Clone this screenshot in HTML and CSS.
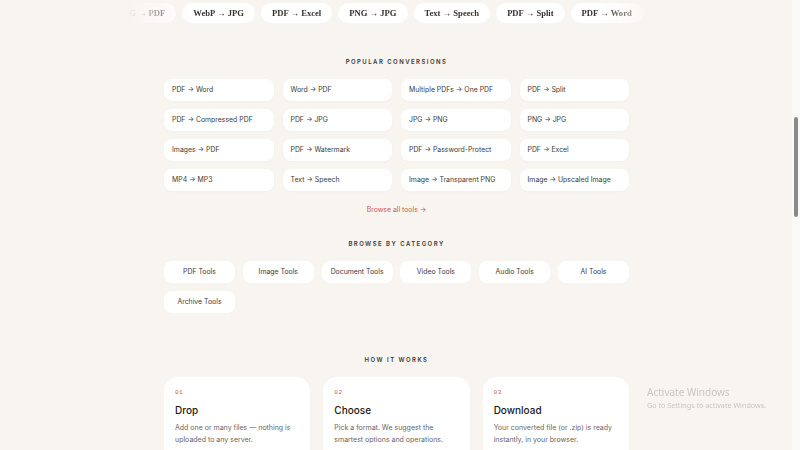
FILE: index.html
```html
<!DOCTYPE html>
<html lang="en">
<head>
  <meta charset="UTF-8" />
  <title>Convert | Tools</title>
  <meta name="viewport" content="width=device-width, initial-scale=1.0" />
  <link rel="stylesheet" href="styles.css">
</head>
<body>

  <!-- Scrolling chips -->
  <div class="marquee">
    <div class="track">
      <span class="chip">JPG → PDF</span>
      <span class="chip">WebP → JPG</span>
      <span class="chip">PDF → Excel</span>
      <span class="chip">PNG → JPG</span>
      <span class="chip">Text → Speech</span>
      <span class="chip">PDF → Split</span>
      <span class="chip">PDF → Word</span>
    </div>
  </div>

  <main class="wrap">
    <h2 class="eyebrow">Popular Conversions</h2>
    <div class="conv-grid">
      <a class="conv">PDF → Word</a>
      <a class="conv">Word → PDF</a>
      <a class="conv">Multiple PDFs → One PDF</a>
      <a class="conv">PDF → Split</a>
      <a class="conv">PDF → Compressed PDF</a>
      <a class="conv">PDF → JPG</a>
      <a class="conv">JPG → PNG</a>
      <a class="conv">PNG → JPG</a>
      <a class="conv">Images → PDF</a>
      <a class="conv">PDF → Watermark</a>
      <a class="conv">PDF → Password-Protect</a>
      <a class="conv">PDF → Excel</a>
      <a class="conv">MP4 → MP3</a>
      <a class="conv">Text → Speech</a>
      <a class="conv">Image → Transparent PNG</a>
      <a class="conv">Image → Upscaled Image</a>
    </div>
    <div class="browse-all"><a>Browse all tools →</a></div>

    <h2 class="eyebrow">Browse by Category</h2>
    <div class="cat-grid">
      <a class="cat">PDF Tools</a>
      <a class="cat">Image Tools</a>
      <a class="cat">Document Tools</a>
      <a class="cat">Video Tools</a>
      <a class="cat">Audio Tools</a>
      <a class="cat">AI Tools</a>
      <a class="cat">Archive Tools</a>
    </div>

    <h2 class="eyebrow how">How it works</h2>
    <div class="steps">
      <div class="step">
        <div class="num">01</div>
        <h3>Drop</h3>
        <p>Add one or many files — nothing is uploaded to any server.</p>
      </div>
      <div class="step">
        <div class="num">02</div>
        <h3>Choose</h3>
        <p>Pick a format. We suggest the smartest options and operations.</p>
      </div>
      <div class="step">
        <div class="num">03</div>
        <h3>Download</h3>
        <p>Your converted file (or .zip) is ready instantly, in your browser.</p>
      </div>
    </div>
  </main>

  <!-- OS overlays -->
  <div class="activate">
    <div class="act-title">Activate Windows</div>
    <div class="act-sub">Go to Settings to activate Windows.</div>
  </div>
  <div class="scrollbar"><div class="thumb"></div></div>

</body>
</html>
```

FILE: styles.css
```css
body {
  margin: 0;
  padding-right: 7px;
  background: #f8f5f0;
  color: #222;
  font-family: 'Inter', 'Noto Sans', sans-serif;
  height: 450px;
  overflow: hidden;
}

a {
  color: inherit;
  text-decoration: none;
}

.marquee {
  width: 540px;
  margin: 3px auto 0;
  overflow: hidden;
  -webkit-mask-image: linear-gradient(to right, transparent 0, #000 70px, #000 470px, transparent 540px);
  mask-image: linear-gradient(to right, transparent 0, #000 70px, #000 470px, transparent 540px);
}

.track {
  display: flex;
  gap: 6px;
  transform: translateX(-18px);
}

.chip {
  flex: none;
  height: 20px;
  line-height: 20px;
  padding: 0 11px;
  background: #fff;
  border-radius: 10px;
  font-family: 'Liberation Serif', 'DejaVu Serif', serif;
  font-size: 8.6px;
  font-weight: 600;
  color: #36312c;
  white-space: nowrap;
}

.wrap {
  width: 465px;
  margin: 0 auto;
}

.eyebrow {
  margin: 0;
  text-align: center;
  font-size: 6px;
  font-weight: 600;
  letter-spacing: 1.45px;
  text-transform: uppercase;
  color: #3a3632;
  line-height: 10px;
}

.wrap > .eyebrow:first-child {
  margin-top: 34px;
}

.conv-grid {
  margin-top: 12px;
  display: grid;
  grid-template-columns: repeat(4, 1fr);
  gap: 8px 9px;
}

.conv {
  height: 22px;
  line-height: 22px;
  padding: 0 8px;
  background: #fff;
  border-radius: 8px;
  font-size: 6.9px;
  color: #403c38;
  white-space: nowrap;
  box-shadow: 0 1px 2px rgba(60, 40, 20, 0.03);
}

.browse-all {
  text-align: center;
  margin: 14px 0 24px;
  font-size: 6.9px;
  line-height: 10px;
  color: #c4604f;
}

.cat-grid {
  margin-top: 12px;
  display: grid;
  grid-template-columns: repeat(6, 1fr);
  gap: 8px 7.8px;
}

.cat {
  height: 22px;
  line-height: 22px;
  text-align: center;
  background: #fff;
  border-radius: 8px;
  font-size: 6.9px;
  color: #403c38;
  white-space: nowrap;
}

.eyebrow.how {
  margin-top: 42px;
}

.steps {
  margin-top: 12px;
  display: grid;
  grid-template-columns: repeat(3, 1fr);
  gap: 13px;
}

.step {
  background: #fff;
  border-radius: 14px;
  padding: 12px 11px 16px;
  height: 120px;
}

.num {
  font-family: 'Liberation Mono', 'DejaVu Sans Mono', monospace;
  font-size: 6px;
  color: #c4604f;
  letter-spacing: 0.5px;
  line-height: 8px;
}

.step h3 {
  margin: 6px 0 5px;
  font-size: 10px;
  font-weight: 500;
  color: #1b1916;
  line-height: 14px;
}

.step p {
  margin: 0;
  font-size: 7px;
  line-height: 11.5px;
  color: #6a655f;
}

.activate {
  position: fixed;
  left: 647px;
  top: 386px;
  color: #c9c6c1;
  font-family: 'Noto Sans', 'Liberation Sans', sans-serif;
}

.act-title {
  font-size: 10px;
  line-height: 13px;
}

.act-sub {
  font-size: 7.2px;
  line-height: 12px;
}

.scrollbar {
  position: fixed;
  right: 0;
  top: 0;
  width: 8px;
  height: 450px;
  background: #fbfaf8;
}

.thumb {
  margin: 117px auto 0;
  width: 4px;
  height: 100px;
  background: #8a8a8a;
  border-radius: 2px;
}
```
